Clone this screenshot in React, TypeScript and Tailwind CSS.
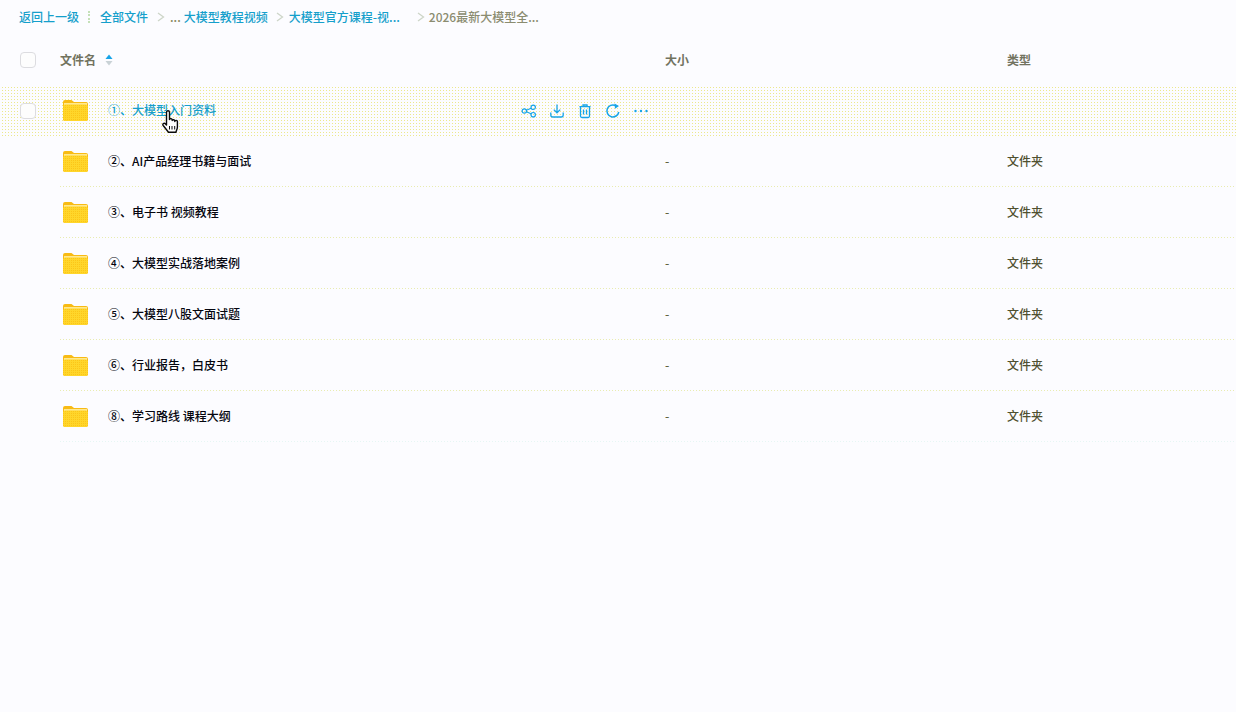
import React from "react";

const font = { fontFamily: '"Noto Sans CJK SC", "Inter", sans-serif' };

function Folder({ id }: { id: string }) {
  return (
    <svg width="25" height="23" viewBox="0 0 25 23" className="shrink-0">
      <defs>
        <pattern id={id} width="2" height="2" patternUnits="userSpaceOnUse">
          <rect width="2" height="2" fill="#ffd62b" />
          <rect width="1" height="1" fill="#fcc518" />
        </pattern>
      </defs>
      <path d="M0 3a2 2 0 0 1 2-2h6.500l2.500 2h12a2 2 0 0 1 2 2v15a2 2 0 0 1-2 2H2a2 2 0 0 1-2-2z" fill="#f8bb14" />
      <rect x="1" y="4" width="23" height="3" fill="#ffe88f" />
      <path d="M0 8a2.500 2.500 0 0 1 2.500-2.500h20A2.500 2.500 0 0 1 25 8v11.500a2.500 2.500 0 0 1-2.500 2.500h-20A2.500 2.500 0 0 1 0 19.500z" fill={`url(#${id})`} />
    </svg>
  );
}

function Check() {
  return <div className="h-4 w-4 shrink-0 rounded-[4px] border border-[#dcdce0] bg-[#fdfdfd]" />;
}

function Chevron() {
  return (
    <svg width="8" height="10" viewBox="0 0 8 10" className="shrink-0">
      <path d="M1 1l5.500 4L1 9" fill="none" stroke="#cdd5c8" strokeWidth="1.300" />
    </svg>
  );
}

function Cursor() {
  return (
    <svg width="17" height="24" viewBox="0 0 17 24" className="absolute left-[162px] top-[25px]">
      <path
        d="M4.500 2.200a1.500 1.500 0 0 1 3 0V9.500a1.400 1.400 0 0 1 2.700.3v.7a1.400 1.400 0 0 1 2.600.3v.7a1.300 1.300 0 0 1 2.600.3V17c0 2.200-1 3-1.500 5.300H6.500L1.200 15.500c-1.100-1.700.9-3 2.100-1.800l1.200 1.300z"
        fill="#ffffff"
        stroke="#0a0a0a"
        strokeWidth="1.400"
        strokeLinejoin="round"
      />
      <path d="M7.500 16v3.500M10 16v3.500M12.700 16v3.500" stroke="#0a0a0a" strokeWidth="1" />
    </svg>
  );
}

const rows = [
  "②、AI产品经理书籍与面试",
  "③、电子书 视频教程",
  "④、大模型实战落地案例",
  "⑤、大模型八股文面试题",
  "⑥、行业报告，白皮书",
  "⑧、学习路线 课程大纲",
];

function Actions() {
  const c = "#17a4e8";
  return (
    <div className="flex items-center gap-[12px]">
      <svg width="16" height="16" viewBox="0 0 16 16" fill="none" stroke={c} strokeWidth="1.200">
        <circle cx="3.300" cy="8" r="2.200" />
        <circle cx="12.200" cy="4.300" r="2.200" />
        <circle cx="12.200" cy="11.700" r="2.200" />
        <path d="M5.400 7.200l4.700-2M5.400 8.800l4.700 2" />
      </svg>
      <svg width="16" height="16" viewBox="0 0 16 16" fill="none" stroke={c} strokeWidth="1.300">
        <path d="M8 1.500v8.200M4.800 6.600L8 9.800l3.200-3.200" />
        <path d="M1.800 9.500v2.500a2 2 0 0 0 2 2h8.400a2 2 0 0 0 2-2V9.500" />
      </svg>
      <svg width="16" height="16" viewBox="0 0 16 16" fill="none" stroke={c} strokeWidth="1.300">
        <path d="M2.500 3.600h11M6 3.600V2h4v1.600" />
        <path d="M3.500 3.600V13a1.500 1.500 0 0 0 1.500 1.500h6a1.500 1.500 0 0 0 1.500-1.500V3.600" />
        <path d="M6.500 6.500v5M9.500 6.500v5" />
      </svg>
      <svg width="16" height="16" viewBox="0 0 16 16" fill="none" stroke={c} strokeWidth="1.500">
        <path d="M10.500 2.500A6 6 0 1 0 13.800 9" />
        <path d="M9.500 .6l4.500 2.400-4 2.800z" fill={c} stroke="none" />
      </svg>
      <svg width="16" height="16" viewBox="0 0 16 16" fill={c}>
        <circle cx="2.500" cy="8" r="1.200" />
        <circle cx="8" cy="8" r="1.200" />
        <circle cx="13.500" cy="8" r="1.200" />
      </svg>
    </div>
  );
}

export default function App() {
  return (
    <div style={font} className="h-[712px] w-[1236px] overflow-hidden bg-[#fcfcff] text-[12px] font-medium leading-[18px]">
      <nav className="flex h-[35px] items-center pb-[2px] pl-[19px] text-[#159fcb]">
        <span>返回上一级</span>
        <span className="ml-[9px] mr-[10px] h-[12px] border-l-2 border-dotted border-[#c5e0b8]" />
        <span>全部文件</span>
        <span className="ml-[9px] mr-[5px]"><Chevron /></span>
        <span className="mr-[3px] text-[#8a8a60]">...</span>
        <span>大模型教程视频</span>
        <span className="ml-[8px] mr-[5px]"><Chevron /></span>
        <span>大模型官方课程-视...</span>
        <span className="ml-[17px] mr-[4px]"><Chevron /></span>
        <span className="text-[#8b8c70]">2026最新大模型全...</span>
      </nav>

      <div className="flex h-[50px] items-center font-bold text-[#72735f]">
        <div className="flex w-[60px] justify-start pl-[20px]"><Check /></div>
        <div className="flex w-[605px] items-center gap-[9px]">
          <span>文件名</span>
          <svg width="8" height="12" viewBox="0 0 8 12">
            <path d="M4 0.500L7.500 5H0.500z" fill="#17a4e8" />
            <path d="M4 11.500L7.500 7H0.500z" fill="#c9d2d6" />
          </svg>
        </div>
        <div className="w-[342px]">大小</div>
        <div>类型</div>
      </div>

      <div className="relative flex h-[51px] items-center bg-[linear-gradient(#fcfcff_2px,transparent_2px),linear-gradient(90deg,#fcfcff_2px,#ece88c_2px)] bg-[length:3px_3px] text-[#159fcb]">
        <div className="flex w-[60px] pl-[20px]"><Check /></div>
        <div className="ml-[3px] w-[45px]"><Folder id="f0" /></div>
        <div className="w-[413px] pb-[2px]">①、大模型入门资料</div>
        <Actions />
        <Cursor />
      </div>

      {rows.map((name, i) => (
        <div key={name} className="relative ml-[60px] flex h-[51px] items-center text-[#05060f]">
          <div className="ml-[3px] w-[45px]"><Folder id={`f${i + 1}`} /></div>
          <div className="w-[557px] pb-[2px]">{name}</div>
          <div className="w-[342px] pb-[2px] text-[#62633f]">-</div>
          <div className="pb-[2px] text-[#4f5030]">文件夹</div>
          <div className={`absolute inset-x-0 bottom-0 h-px bg-[length:3px_1px] ${i === rows.length - 1 ? "bg-[linear-gradient(90deg,#e6f6f4_1px,transparent_1px)]" : "bg-[linear-gradient(90deg,#e9ecb0_1px,transparent_1px)]"}`} />
        </div>
      ))}
    </div>
  );
}
